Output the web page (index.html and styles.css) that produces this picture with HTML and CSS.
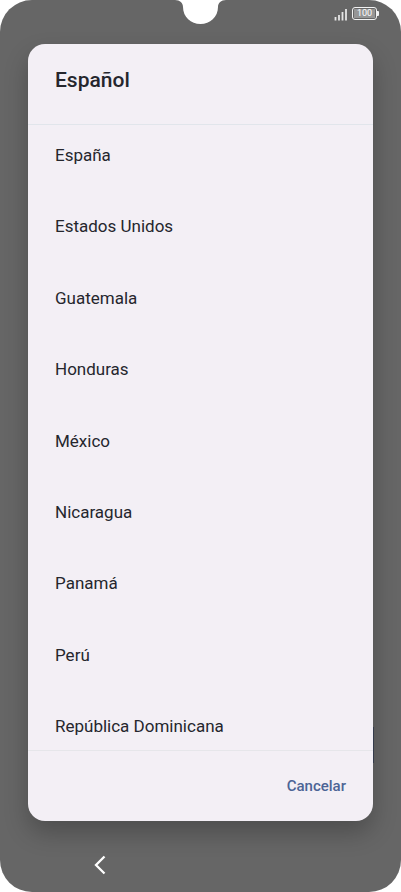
FILE: index.html
```html
<!DOCTYPE html>
<html lang="es">
<head>
<meta charset="utf-8">
<meta name="viewport" content="width=device-width, initial-scale=1">
<title>Español</title>
<link rel="stylesheet" href="styles.css">
</head>
<body>
<div class="screen">
  <svg class="notch" width="51" height="25" viewBox="0 0 51 25" aria-hidden="true">
    <path d="M0 0C5 0 8 3 8 7C8 17 16 24 25.500 24C35 24 43 17 43 7C43 3 46 0 51 0Z" fill="#fff"/>
  </svg>
  <header class="status">
    <svg class="signal" width="14" height="13" viewBox="0 0 14 13" aria-hidden="true">
      <path d="M1.500 9V12.500M5 7V12.500M8.500 4V12.500M12 1V12.500" stroke="#e6e6e6" stroke-width="1.800" fill="none"/>
    </svg>
    <div class="battery"><span class="level">100</span></div>
  </header>
  <main class="dialog" role="dialog" aria-labelledby="title">
    <h1 class="title" id="title">Español</h1>
    <div class="regions">
      <button class="region" type="button">España</button>
      <button class="region" type="button">Estados Unidos</button>
      <button class="region" type="button">Guatemala</button>
      <button class="region" type="button">Honduras</button>
      <button class="region" type="button">México</button>
      <button class="region" type="button">Nicaragua</button>
      <button class="region" type="button">Panamá</button>
      <button class="region" type="button">Perú</button>
      <button class="region" type="button">República Dominicana</button>
    </div>
    <footer class="actions">
      <button class="cancel" type="button">Cancelar</button>
    </footer>
    <span class="handle"></span>
  </main>
  <nav class="navbar">
    <button class="back" type="button" aria-label="Atrás">
      <svg width="12" height="20" viewBox="0 0 12 20" aria-hidden="true">
        <path d="M10.500 1.500L2 10L10.500 18.500" fill="none" stroke="#fff" stroke-width="2.300"/>
      </svg>
    </button>
  </nav>
</div>
</body>
</html>
```
FILE: styles.css
```css
* {
  box-sizing: border-box;
}

body {
  margin: 0;
  background: #fff;
  font-family: Roboto, "Liberation Sans", sans-serif;
  color: #25262d;
}

button {
  border: 0;
  padding: 0;
  background: none;
  color: inherit;
  font: inherit;
  cursor: pointer;
}

.screen {
  position: relative;
  display: flex;
  flex-direction: column;
  min-height: 100vh;
  overflow: hidden;
  border-radius: 32px;
  background: #666;
}

.notch {
  position: absolute;
  top: 0;
  left: 50%;
  margin-left: -26px;
}

.status {
  display: flex;
  justify-content: flex-end;
  gap: 4px;
  height: 44px;
  padding: 7px 24px 0 0;
}

.signal {
  margin-top: 1px;
}

.battery {
  position: relative;
  width: 25px;
  height: 13px;
  border: 1px solid #f2f2f2;
  border-radius: 3px;
  padding: 1px;
}

.battery::after {
  content: "";
  position: absolute;
  top: 3px;
  right: -3px;
  width: 2px;
  height: 5px;
  border-radius: 0 1px 1px 0;
  background: #f2f2f2;
}

.level {
  display: block;
  background: #969696;
  color: #fff;
  font-size: 9px;
  line-height: 9px;
  text-align: center;
}

.dialog {
  position: relative;
  flex: 1;
  display: flex;
  flex-direction: column;
  margin: 0 28px;
  border-radius: 17px;
  background: #f3eff5;
  box-shadow: 0 12px 24px rgba(0, 0, 0, 0.24);
}

.title {
  margin: 0;
  height: 81px;
  padding: 24px 27px 0;
  border-bottom: 1px solid #e1e5eb;
  font-size: 21px;
  font-weight: 500;
  line-height: 24px;
}

.regions {
  flex: 1;
  display: flex;
  flex-direction: column;
  justify-content: space-between;
  padding: 18px 27px 12px;
}

.region {
  font-size: 17px;
  line-height: 24px;
  text-align: left;
}

.actions {
  display: flex;
  justify-content: flex-end;
  align-items: center;
  height: 71px;
  padding: 0 27px;
  border-top: 1px solid #e6e6ea;
}

.cancel {
  color: #4c6495;
  font-size: 15px;
  font-weight: 500;
  line-height: 24px;
}

.handle {
  position: absolute;
  right: -1px;
  bottom: 58px;
  width: 1px;
  height: 36px;
  background: #343b4b;
}

.navbar {
  display: flex;
  height: 71px;
  padding: 34px 94px 0;
}

.back {
  width: 12px;
  height: 20px;
}

.back svg {
  display: block;
}
```
